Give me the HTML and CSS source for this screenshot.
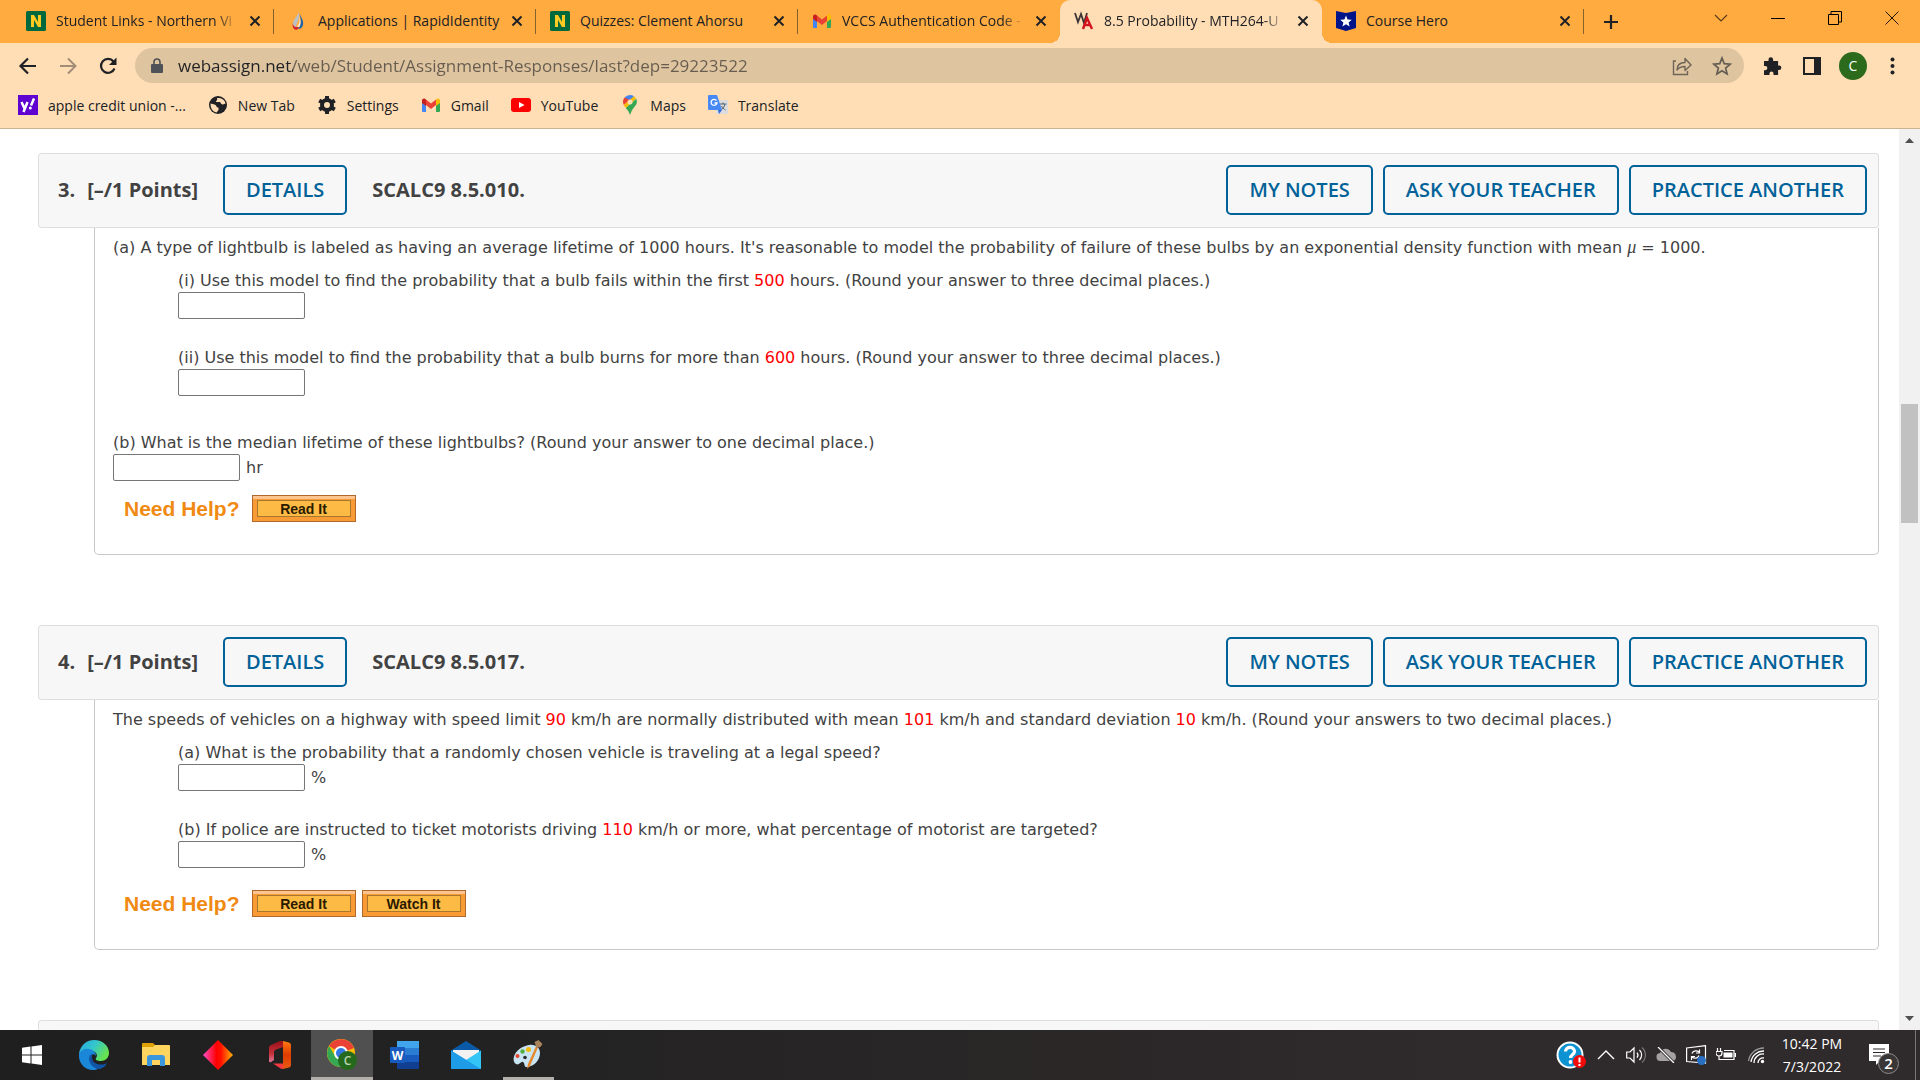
FILE: index.html
```html
<!DOCTYPE html>
<html lang="en">
<head>
  <meta charset="UTF-8" />
  <meta name="viewport" content="width=device-width, initial-scale=1.0"/>
  <title>8.5 Probability - MTH264</title>
  <link rel="stylesheet" href="styles.css">
</head>
<body>

<!-- Shared icons -->
<svg class="sprite" aria-hidden="true">
  <symbol id="i-close" viewBox="0 0 12 12"><path d="M1.500 1.500l9 9M10.500 1.500l-9 9" stroke="#202124" stroke-width="2" fill="none"/></symbol>
  <symbol id="i-nova" viewBox="0 0 20 20"><rect width="20" height="20" rx="1.500" fill="#006a3d"/><path d="M5 16V4h3l4 7V4h3v12h-3L8 9v7z" fill="#ffcb23"/></symbol>
  <symbol id="i-gmail" viewBox="0 0 20 20"><path d="M1 5v11a1 1 0 0 0 1 1h3V8.500z" fill="#4285f4"/><path d="M15 17h3a1 1 0 0 0 1-1V5l-4 3.500z" fill="#34a853"/><path d="M5 4.500v5.500l5 4 5-4V4.500l-5 4z" fill="#ea4335"/><path d="M1 5.500V8l4 3V4.500L4.300 4C3 3 1 3.800 1 5.500z" fill="#c5221f"/><path d="M15 4.500V11l4-3V5.500C19 3.800 17 3 15.700 4z" fill="#fbbc04"/></symbol>
</svg>

<header class="browser">
  <div class="tabs">
    <div class="tab">
      <svg class="icon"><use href="#i-nova"/></svg>
      <a href="#" class="tab-title fade">Student Links - Northern Vi</a>
      <button class="close" aria-label="Close tab"><svg><use href="#i-close"/></svg></button>
    </div>
    <div class="tab">
      <svg class="icon" viewBox="0 0 20 20"><path d="M11 1c-1 4-6 7-6 12a6 6 0 0 0 3 5c-1-5 4-8 3-17z" fill="#b9c0c8"/><path d="M11 1c1 4 5 8 4 13-1 3-3 4-5 4 3-3 4-8 1-17z" fill="#1d64ad"/><path d="M5 12c0 4 2 4 6 4-1 2-2 3-3 3-3-1-4-4-3-7z" fill="#d5232f"/><path d="M11 5c1 4 1 8-2 11 2 0 3-1 3-2 1-3 0-6-1-9z" fill="#f3f5f7"/></svg>
      <a href="#" class="tab-title">Applications | RapidIdentity</a>
      <button class="close" aria-label="Close tab"><svg><use href="#i-close"/></svg></button>
    </div>
    <div class="tab">
      <svg class="icon"><use href="#i-nova"/></svg>
      <a href="#" class="tab-title">Quizzes: Clement Ahorsu</a>
      <button class="close" aria-label="Close tab"><svg><use href="#i-close"/></svg></button>
    </div>
    <div class="tab no-line">
      <svg class="icon"><use href="#i-gmail"/></svg>
      <a href="#" class="tab-title fade">VCCS Authentication Code -</a>
      <button class="close" aria-label="Close tab"><svg><use href="#i-close"/></svg></button>
    </div>
    <div class="tab active">
      <svg class="icon" viewBox="0 0 20 20"><path d="M1 2l3 9 3-8 3 9 3-10" stroke="#3b3436" stroke-width="1.800" fill="none"/><path d="M9 18l4-11 5 11M10 14h6" stroke="#d2121c" stroke-width="2.400" fill="none"/></svg>
      <a href="#" class="tab-title fade">8.5 Probability - MTH264-U</a>
      <button class="close" aria-label="Close tab"><svg><use href="#i-close"/></svg></button>
    </div>
    <div class="tab">
      <svg class="icon" viewBox="0 0 20 20"><path d="M0 0l10 2 10-2v17l-10 3-10-3z" fill="#001489"/><path d="M10 4.500l1.600 3.900 4.200.3-3.200 2.700 1 4.100L10 13.300l-3.600 2.200 1-4.100-3.200-2.700 4.200-.3z" fill="#fff"/></svg>
      <a href="#" class="tab-title">Course Hero</a>
      <button class="close" aria-label="Close tab"><svg><use href="#i-close"/></svg></button>
    </div>
    <button class="new-tab" aria-label="New tab"><svg width="16" height="16" viewBox="0 0 16 16"><path d="M8 1v14M1 8h14" stroke="#202124" stroke-width="2.200"/></svg></button>
    <div class="window-buttons">
      <button aria-label="Search tabs"><svg width="14" height="14" viewBox="0 0 14 14"><path d="M1 4l6 6 6-6" stroke="#5a3d18" stroke-width="1.200" fill="none"/></svg></button>
      <button aria-label="Minimize"><svg width="14" height="14" viewBox="0 0 14 14"><path d="M0 7.500h14" stroke="#000"/></svg></button>
      <button aria-label="Restore"><svg width="14" height="14" viewBox="0 0 14 14"><path d="M.500 3.500h10v10H.500zM3 3V.500h10.500V11H11" stroke="#000" fill="none"/></svg></button>
      <button aria-label="Close"><svg width="14" height="14" viewBox="0 0 14 14"><path d="M.500.500l13 13M13.500.500l-13 13" stroke="#201508" fill="none"/></svg></button>
    </div>
  </div>

  <div class="toolbar">
    <button aria-label="Back"><svg width="20" height="20" viewBox="0 0 20 20"><path d="M18 10H3M10 2.500L2.500 10l7.500 7.500" stroke="#202124" stroke-width="2.200" fill="none"/></svg></button>
    <button aria-label="Forward"><svg width="20" height="20" viewBox="0 0 20 20"><path d="M2 10h15M10 2.500l7.500 7.500-7.500 7.500" stroke="#a28d77" stroke-width="2" fill="none"/></svg></button>
    <button aria-label="Reload"><svg width="20" height="20" viewBox="0 0 20 20"><path d="M16.500 12.500A7 7 0 1 1 15.500 5.500" stroke="#202124" stroke-width="2.200" fill="none"/><path d="M18.500 1.500V9H11z" fill="#202124"/></svg></button>
    <div class="omnibox">
      <svg width="12" height="16" viewBox="0 0 12 16"><path d="M1 6h10a1 1 0 0 1 1 1v7a1 1 0 0 1-1 1H1a1 1 0 0 1-1-1V7a1 1 0 0 1 1-1z" fill="#4f5256"/><path d="M3 7V4a3 3 0 0 1 6 0v3" stroke="#4f5256" stroke-width="1.600" fill="none"/></svg>
      <input class="url" type="text" aria-label="Address" value="webassign.net/web/Student/Assignment-Responses/last?dep=29223522">
      <button aria-label="Share"><svg width="20" height="20" viewBox="0 0 20 20"><path d="M4 5H1.500v13.500h14V15" stroke="#6e6558" stroke-width="1.400" fill="none"/><path d="M5 14c0-5 3-7.500 8-7.500v-4L19 9l-6 5.500v-4c-4 0-6 1-8 3.500z" stroke="#6e6558" stroke-width="1.400" fill="none" stroke-linejoin="round"/></svg></button>
      <button aria-label="Bookmark this tab"><svg width="20" height="20" viewBox="0 0 20 20"><path d="M10 2l2.200 5.600 6 .5-4.600 3.900 1.500 5.900L10 14.700l-5.100 3.200L6.400 12 1.800 8.100l6-.5z" stroke="#645d53" stroke-width="1.700" fill="none"/></svg></button>
    </div>
    <button aria-label="Extensions"><svg width="20" height="20" viewBox="0 0 20 20"><path d="M2 5h4.500V3.500a2.300 2.300 0 0 1 4.600 0V5h5v4.500h1a2.200 2.200 0 0 1 0 4.500h-1v5h-4.600v-1.500a2 2 0 0 0-4 0V19H2v-4.800h1.300a2 2 0 0 0 0-4.200H2z" fill="#202124"/></svg></button>
    <button aria-label="Side panel"><svg width="18" height="18" viewBox="0 0 18 18"><path d="M1 1h16v16H1z" stroke="#202124" stroke-width="2" fill="none"/><path d="M11 0h7v18h-7z" fill="#202124"/></svg></button>
    <button class="avatar" aria-label="Profile">C</button>
    <button aria-label="Menu"><svg width="5" height="18" viewBox="0 0 5 18"><g fill="#202124"><circle cx="2.500" cy="2.500" r="2"/><circle cx="2.500" cy="9" r="2"/><circle cx="2.500" cy="15.500" r="2"/></g></svg></button>
  </div>

  <nav class="bookmarks">
    <a href="#"><svg class="icon" viewBox="0 0 20 20"><rect width="20" height="20" fill="#5f01d1"/><path d="M3.500 7l3 6.500M9.500 7L5.500 17M13 10.500L16 3.500" stroke="#fff" stroke-width="2.500" fill="none"/><circle cx="12.300" cy="13" r="1.500" fill="#fff"/></svg>apple credit union -...</a>
    <a href="#"><svg class="icon" viewBox="0 0 20 20"><circle cx="10" cy="10" r="9" fill="#202124"/><path d="M2.500 8.500l4 1c3 1 1 3 4 3v2.500l-2 2.500c-4-1-6-4-6-9zM9 3c1 2-1 2.500-1 4h4c1 1 1 2.500 3 2.500l2.500-1C17 5 14 3 9 3z" fill="#ffdeb6"/></svg>New Tab</a>
    <a href="#"><svg class="icon" viewBox="0 0 20 20"><circle cx="10" cy="10" r="5" stroke="#202124" stroke-width="4" fill="none"/><path d="M10 1v4M10 15v4M2.200 5.500l3.500 2M14.300 12.500l3.500 2M2.200 14.500l3.500-2M14.300 7.500l3.500-2" stroke="#202124" stroke-width="4"/></svg>Settings</a>
    <a href="#"><svg class="icon"><use href="#i-gmail"/></svg>Gmail</a>
    <a href="#"><svg class="icon" viewBox="0 0 20 20"><rect y="3" width="20" height="14" rx="3" fill="#f00"/><path d="M8 7l5.500 3L8 13z" fill="#fff"/></svg>YouTube</a>
    <a href="#"><svg class="icon" viewBox="0 0 20 20"><path d="M10 0a7 7 0 0 0-5.400 2.500L10 7l4-5.700A7 7 0 0 0 10 0z" fill="#4285f4"/><path d="M4.600 2.500A7 7 0 0 0 3.800 10L10 5z" fill="#ea4335"/><path d="M3.800 10l2 3L16 3.500 14 1.300z" fill="#fbbc04"/><path d="M16.200 3.800C18 8 16 10 14 12.500S11 17 10 20c-1-3-2-4.500-4.200-7z" fill="#34a853"/><circle cx="10" cy="7" r="2.500" fill="#ffdeb6"/></svg>Maps</a>
    <a href="#"><svg class="icon" viewBox="0 0 20 20"><rect x="8" y="5" width="12" height="14" rx="1" fill="#dadce0"/><path d="M11.500 9h7M15 7.500V9M17 9c-.500 3-2.500 5-4.500 6M13.500 11c1 2 2.500 3 4 4" stroke="#52616c" fill="none"/><path d="M1 0h8l5 15H1a1 1 0 0 1-1-1V1a1 1 0 0 1 1-1z" fill="#4688f4"/><path d="M10 15h4l-3 4z" fill="#3367d6"/><path d="M8.500 5.500a3 3 0 1 0 .5 2.500H6.500" stroke="#fff" stroke-width="1.300" fill="none"/></svg>Translate</a>
  </nav>
</header>

<div class="viewport">
  <main class="page">
    <section class="question">
      <div class="question-head">
        <h2><span>3.</span> <span>[–/1 Points]</span></h2>
        <button class="btn">DETAILS</button>
        <h3>SCALC9 8.5.010.</h3>
        <div class="actions">
          <button class="btn">MY NOTES</button>
          <button class="btn">ASK YOUR TEACHER</button>
          <button class="btn">PRACTICE ANOTHER</button>
        </div>
      </div>
      <div class="question-body">
        <p>(a) A type of lightbulb is labeled as having an average lifetime of 1000 hours. It's reasonable to model the probability of failure of these bulbs by an exponential density function with mean <i class="mu">μ</i> = 1000.</p>
        <div class="parts">
          <div class="part">
            <label for="q3a1">(i) Use this model to find the probability that a bulb fails within the first <em>500</em> hours. (Round your answer to three decimal places.)</label>
            <div class="answer"><input type="text" id="q3a1"></div>
          </div>
          <div class="part">
            <label for="q3a2">(ii) Use this model to find the probability that a bulb burns for more than <em>600</em> hours. (Round your answer to three decimal places.)</label>
            <div class="answer"><input type="text" id="q3a2"></div>
          </div>
        </div>
        <div class="part last-part">
          <label for="q3b">(b) What is the median lifetime of these lightbulbs? (Round your answer to one decimal place.)</label>
          <div class="answer"><input type="text" id="q3b"> hr</div>
        </div>
        <div class="help">
          <strong>Need Help?</strong>
          <button>Read It</button>
        </div>
      </div>
    </section>

    <section class="question">
      <div class="question-head">
        <h2><span>4.</span> <span>[–/1 Points]</span></h2>
        <button class="btn">DETAILS</button>
        <h3>SCALC9 8.5.017.</h3>
        <div class="actions">
          <button class="btn">MY NOTES</button>
          <button class="btn">ASK YOUR TEACHER</button>
          <button class="btn">PRACTICE ANOTHER</button>
        </div>
      </div>
      <div class="question-body">
        <p>The speeds of vehicles on a highway with speed limit <em>90</em> km/h are normally distributed with mean <em>101</em> km/h and standard deviation <em>10</em> km/h. (Round your answers to two decimal places.)</p>
        <div class="parts">
          <div class="part">
            <label for="q4a">(a) What is the probability that a randomly chosen vehicle is traveling at a legal speed?</label>
            <div class="answer"><input type="text" id="q4a"> %</div>
          </div>
          <div class="part">
            <label for="q4b">(b) If police are instructed to ticket motorists driving <em>110</em> km/h or more, what percentage of motorist are targeted?</label>
            <div class="answer"><input type="text" id="q4b"> %</div>
          </div>
        </div>
        <div class="help">
          <strong>Need Help?</strong>
          <button>Read It</button>
          <button>Watch It</button>
        </div>
      </div>
    </section>

    <section class="question">
      <div class="question-head"></div>
    </section>
  </main>

  <div class="scrollbar">
    <svg width="9" height="5" viewBox="0 0 9 5"><path d="M0 5l4.500-5L9 5z" fill="#505050"/></svg>
    <div class="track"><div class="thumb"></div></div>
    <svg width="9" height="5" viewBox="0 0 9 5"><path d="M0 0l4.500 5L9 0z" fill="#505050"/></svg>
  </div>
</div>

<footer class="taskbar">
  <div class="apps">
    <button aria-label="Start"><svg width="20" height="20" viewBox="0 0 20 20"><path d="M0 2.800L8.500 1.600V9.500H0zM9.500 1.500L20 0v9.500H9.500zM0 10.500h8.500v7.900L0 17.200zM9.500 10.500H20V20L9.500 18.500z" fill="#fff"/></svg></button>
    <button aria-label="Edge"><svg width="30" height="30" viewBox="0 0 30 30"><defs><linearGradient id="edge" x1="0" y1="0" x2="1" y2=".5"><stop offset="0" stop-color="#26a5dd"/><stop offset=".5" stop-color="#33c6cf"/><stop offset="1" stop-color="#67e350"/></linearGradient></defs><path d="M0 14C1 6 7 0 15 0c9 0 15 6 15 13 0 5-4 8-8 8-4 0-6-1-5-3 2-2 1-7-5-7-5 0-9 2-12 3z" fill="url(#edge)"/><path d="M0 14c2-4 6-6 10-5 5 1 7 4 7 7-2-3-5-2-6 1-2 5 3 10 8 12-10 4-20-4-19-15z" fill="#1a87d8"/><path d="M11 15c-3 7 3 14 10 14 3-1 6-3 7-6-5 3-15 2-15-6 0-2 1-3 2-3z" fill="#1054a5"/></svg></button>
    <button aria-label="File Explorer"><svg width="28" height="24" viewBox="0 0 28 24"><path d="M0 3V1a1 1 0 0 1 1-1h10l2 2h14v20H0z" fill="#e0a106"/><path d="M0 4h11l2-2h14a1 1 0 0 1 1 1v19H0z" fill="#ffd55f"/><path d="M5 23v-8a3 3 0 0 1 3-3h12a3 3 0 0 1 3 3v8h-5v-6h-8v6z" fill="#3a96dd"/></svg></button>
    <button aria-label="Media"><svg width="30" height="30" viewBox="0 0 30 30"><defs><linearGradient id="dia"><stop offset="0" stop-color="#ff4fc8"/><stop offset=".45" stop-color="#ff0000"/><stop offset=".6" stop-color="#ff1000"/><stop offset="1" stop-color="#ffb400"/></linearGradient></defs><path d="M15 0l15 15-15 15L0 15z" fill="url(#dia)"/></svg></button>
    <button aria-label="Office"><svg width="22" height="28" viewBox="0 0 22 28"><defs><linearGradient id="office" x1="0" y1="0" x2="0" y2="1"><stop offset="0" stop-color="#9b1018"/><stop offset=".6" stop-color="#c5323a"/><stop offset="1" stop-color="#e07aa0"/></linearGradient><linearGradient id="office2" x1="0" y1="0" x2="0" y2="1"><stop offset="0" stop-color="#fc7a12"/><stop offset=".5" stop-color="#e03c00"/><stop offset="1" stop-color="#e85a12"/></linearGradient></defs><path d="M0 8c0-2 0-3 2-4l9-4h3v6L7 8.500c-1 .500-2 1-2 2.500v8l-3 2c-1 .500-2 0-2-1z" fill="url(#office)"/><path d="M14 0l6 1.500c1 .500 2 1 2 2.500v20c0 1-.500 2-2 2.500L14 28z" fill="url(#office2)"/><path d="M4 22.500h10V28l-2-.300z" fill="#f2393f"/></svg></button>
    <button class="current" aria-label="Chrome"><svg width="30" height="32" viewBox="0 0 30 32"><circle cx="14" cy="14" r="14" fill="#fbbc04"/><path d="M14 14L2 7a14 14 0 0 1 25 2z" fill="#ea4335"/><path d="M2 7a14 14 0 0 0 11 21l5-10-10-1z" fill="#34a853"/><circle cx="14" cy="14" r="7" fill="#fff"/><circle cx="14" cy="14" r="5" fill="#3478e5"/><circle cx="20.500" cy="21.500" r="9.500" fill="#256a1c"/><text x="20.500" y="26" text-anchor="middle" class="badge-letter">C</text></svg></button>
    <button aria-label="Word"><svg width="29" height="28" viewBox="0 0 29 28"><path d="M7 0h22v7H7z" fill="#41a5ee"/><path d="M7 7h22v7H7z" fill="#2b7cd3"/><path d="M7 14h22v7H7z" fill="#185abd"/><path d="M7 21h22v7H7z" fill="#103f91"/><rect y="6" width="15" height="16" rx="1" fill="#185abd"/><text x="7.500" y="18.500" text-anchor="middle" class="word-letter">W</text></svg></button>
    <button aria-label="Mail"><svg width="30" height="28" viewBox="0 0 30 28"><path d="M0 9.500L15 0l15 9.500v2H0z" fill="#0b5aa8"/><path d="M2 9h26v10H2z" fill="#f2f2f2"/><path d="M0 9.500L15 19l15-9.500V28H0z" fill="#32c5f5"/><path d="M0 9.500L30 28H0z" fill="#1f9ce8"/></svg></button>
    <button class="open" aria-label="Paint"><svg width="30" height="30" viewBox="0 0 30 30"><path d="M16 5c7-1 11 3 11 8 0 7-6 14-14 14-2 0-1-4-3-5s-4 4-7 2-3-6-1-10C5 9 10 6 16 5z" fill="#c9e4f2"/><circle cx="4.500" cy="16" r="2" fill="#e8442e"/><circle cx="9.500" cy="11.500" r="2.200" fill="#52b043"/><circle cx="15.500" cy="9.500" r="2.500" fill="#f5b90b"/><circle cx="12" cy="17.500" r="1.800" fill="#2a2a2a"/><path d="M24 4l2 1-9 21-3 3 1-5z" fill="#e8892e"/><path d="M21.500 2l4-2 4 4-2 3-4 1z" fill="#a8835c"/></svg></button>
  </div>
  <div class="tray">
    <button class="wide" aria-label="Help"><svg width="30" height="28" viewBox="0 0 30 28"><circle cx="14" cy="14" r="12.500" fill="#0e93d2" stroke="#fff" stroke-width="2"/><path d="M9.500 10.500c0-5.500 9-5.500 9 0 0 3-4 3-4 6.500" stroke="#fff" stroke-width="3.200" fill="none"/><circle cx="14.500" cy="21" r="1.900" fill="#fff"/><circle cx="23.500" cy="20.500" r="6.500" fill="#f00a0a"/><path d="M23.500 16.500v5M23.500 23v2" stroke="#fff" stroke-width="2"/></svg></button>
    <button aria-label="Show hidden icons"><svg width="18" height="10" viewBox="0 0 18 10"><path d="M1 9l8-8 8 8" stroke="#fff" stroke-width="1.400" fill="none"/></svg></button>
    <button aria-label="Volume"><svg width="20" height="18" viewBox="0 0 20 18"><path d="M.700 6H4l4-4v14l-4-4H.700z" stroke="#fff" stroke-width="1.200" fill="none"/><path d="M11 6.500a4 4 0 0 1 0 5M13.500 4a7 7 0 0 1 0 10" stroke="#fff" stroke-width="1.200" fill="none"/><path d="M16 1.500a10 10 0 0 1 0 15" stroke="#777" stroke-width="1.200" fill="none"/></svg></button>
    <button aria-label="OneDrive"><svg width="20" height="16" viewBox="0 0 20 16"><path d="M5 14a4 4 0 0 1-1-8c2-5 8-6 11-1 4 0 5 3 5 5s-1 4-4 4z" fill="#a3a1a1"/><path d="M2 0l16 16" stroke="#2f2a2b" stroke-width="3"/><path d="M2 0l16 16" stroke="#fff" stroke-width="1.300"/></svg></button>
    <button aria-label="Update"><svg width="21" height="20" viewBox="0 0 21 20"><path d="M.600 3L19.500.600V18L.600 16.500z" stroke="#fff" stroke-width="1.200" fill="none"/><path d="M6 8.500c1-3 5-3.500 7-1.500M13.500 4.500V8H10M13 10.500c-1 3-5 3.500-7 1.500M5.500 15v-3.500H9" stroke="#fff" stroke-width="1.200" fill="none"/><circle cx="15.500" cy="15.500" r="4.500" fill="#2a70c2"/></svg></button>
    <button aria-label="Battery"><svg width="20" height="14" viewBox="0 0 20 14"><path d="M1.500 0v3M4.500 0v3M0 3.500h6v1.500a3 3 0 0 1-6 0zM3 8v3.500h15v-9H8" stroke="#fff" stroke-width="1.200" fill="none"/><path d="M7.500 4.500h9v5h-9zM18.500 5H20v4h-1.500z" fill="#fff"/></svg></button>
    <button aria-label="Network"><svg width="17" height="17" viewBox="0 0 17 17"><path d="M10 16a5 5 0 0 1 6-5M6 16A9 9 0 0 1 16 7M3 15A12.500 12.500 0 0 1 16 4" stroke="#fff" stroke-width="1.300" fill="none"/><path d="M.500 14A15.500 15.500 0 0 1 16 1" stroke="#999" stroke-width="1.300" fill="none"/><circle cx="14.500" cy="14.500" r="1.700" fill="#fff"/></svg></button>
    <div class="clock"><span>10:42 PM</span><span>7/3/2022</span></div>
    <button class="notices" aria-label="Notifications"><svg width="32" height="32" viewBox="0 0 32 32"><path d="M1 1h20v17H12l-4 4v-4H1z" fill="#fff"/><path d="M5 6h12M5 9.500h12M5 13h8" stroke="#2f2a2b" stroke-width="1.200"/><circle cx="20.500" cy="20.500" r="10" fill="#3a3637" stroke="#8d8b8b"/><text x="20.500" y="26" text-anchor="middle" class="count">2</text></svg></button>
  </div>
</footer>

</body>
</html>
```
FILE: styles.css
```css
* { margin: 0; padding: 0; box-sizing: border-box; }

body {
  height: 100vh;
  display: flex;
  flex-direction: column;
  overflow: hidden;
  background: #fff;
  color: #424242;
  font-family: 'Open Sans', sans-serif;
}

button {
  display: flex;
  align-items: center;
  justify-content: center;
  background: none;
  border: none;
  font-family: inherit;
  cursor: pointer;
}

a { color: inherit; text-decoration: none; }
svg { flex: none; display: block; }

.sprite { position: absolute; width: 0; height: 0; }
.icon { width: 20px; height: 20px; }

/* Browser */
.browser {
  background: #ffdeb6;
  color: #202124;
  font-size: 14px;
  border-bottom: 1px solid #cdb391;
}

.tabs {
  display: flex;
  height: 43px;
  padding-left: 12px;
  background: #ffab40;
}

.tab {
  position: relative;
  flex: 0 1 262px;
  min-width: 0;
  display: flex;
  align-items: center;
  gap: 10px;
  padding: 0 12px 2px 14px;
}

.tab::after {
  content: '';
  position: absolute;
  right: 0;
  top: 9px;
  width: 1px;
  height: 25px;
  background: #86602f;
}
.no-line::after { display: none; }

.tab.active {
  background: #ffdeb6;
  border-radius: 10px 10px 0 0;
}
/* curved feet of the active tab */
.active::before, .active::after {
  content: '';
  position: absolute;
  top: auto;
  bottom: 0;
  width: 10px;
  height: 10px;
}
.active::before {
  left: -10px;
  background: radial-gradient(circle at 0 0, transparent 10px, #ffdeb6 10px);
}
.active::after {
  right: -10px;
  background: radial-gradient(circle at 100% 0, transparent 10px, #ffdeb6 10px);
}

.tab-title {
  flex: 1;
  overflow: hidden;
  white-space: nowrap;
}
.fade {
  -webkit-mask-image: linear-gradient(to right, #000 88%, transparent);
  mask-image: linear-gradient(to right, #000 88%, transparent);
}

.close { width: 14px; height: 20px; }
.close svg { width: 12px; height: 12px; }

.new-tab { width: 54px; }

.window-buttons {
  display: flex;
  align-items: center;
  height: 36px;
  margin-left: auto;
}
.window-buttons button { width: 57px; height: 36px; }

.toolbar {
  display: flex;
  align-items: center;
  height: 45px;
  padding: 0 16px 0 8px;
}
.toolbar > button { width: 40px; height: 36px; }
.toolbar > button:last-child { margin-right: -8px; }

.toolbar > .avatar {
  width: 28px;
  height: 28px;
  margin: 0 5px 0 7px;
  border-radius: 50%;
  background: #2c6a1c;
  color: #fff;
  font-size: 14px;
}

.omnibox {
  flex: 1;
  display: flex;
  align-items: center;
  height: 35px;
  margin: 0 8px 0 7px;
  padding: 0 2px 0 16px;
  border-radius: 18px;
  background: #dfc4a0;
}
.omnibox button { width: 40px; height: 35px; }

.url {
  flex: 1;
  margin-left: 15px;
  border: none;
  outline: none;
  color: transparent;
  font: 17px 'Open Sans', sans-serif;
  background: linear-gradient(to right, #202124 115px, #665c4f 115px);
  -webkit-background-clip: text;
  background-clip: text;
}

.bookmarks {
  display: flex;
  align-items: center;
  gap: 22px;
  height: 40px;
  padding: 0 18px 6px;
}
.bookmarks a { display: flex; align-items: center; gap: 10px; }

/* Page */
.viewport {
  flex: 1;
  min-height: 0;
  display: flex;
}

.page {
  flex: 1;
  overflow: hidden;
  padding: 24px 20px 0 38px;
}

.question { margin-bottom: 70px; }

.question-head {
  display: flex;
  align-items: center;
  height: 75px;
  padding: 0 11px 2px 19px;
  background: #f7f7f7;
  border: 1px solid #dedede;
  border-radius: 3px;
}
.question-head h2, .question-head h3 {
  font-size: 20px;
  font-weight: 700;
}
.question-head h2 {
  display: flex;
  gap: 12px;
  width: 165px;
}
.question-head h3 { margin-left: 25px; }

.actions {
  display: flex;
  gap: 10px;
  margin-left: auto;
}

.btn {
  height: 50px;
  padding: 0 21px;
  border: 2px solid #006298;
  border-radius: 5px;
  color: #006298;
  font-size: 20px;
  font-weight: 600;
}

.question-body {
  margin-left: 56px;
  padding: 10px 18px 32px;
  border: 1px solid #c8c8c8;
  border-top: none;
  border-radius: 0 0 5px 5px;
  font-family: Verdana, 'DejaVu Sans', sans-serif;
  font-size: 16px;
  line-height: 20px;
}
.question-body em { color: #f00; font-style: normal; }
.mu { font-family: 'Liberation Serif', serif; font-size: 18px; line-height: 1; }

.parts { margin: 13px 0 0 65px; }
.part + .part { margin-top: 29px; }
.part label { display: block; }
.last-part { margin-top: 37px; }

.answer {
  display: flex;
  gap: 6px;
  margin-top: 1px;
  line-height: 27px;
}
.answer input {
  width: 127px;
  height: 27px;
  padding: 0 4px;
  border: 1px solid #767676;
  border-radius: 2px;
  font-size: 16px;
}

.help {
  display: flex;
  align-items: center;
  gap: 6px;
  margin: 14px 0 0 11px;
  font-family: 'Liberation Sans', Arial, sans-serif;
}
.parts + .help { margin-top: 22px; }
.help strong {
  margin-right: 6px;
  color: #f08a12;
  font-size: 21px;
}
.help button {
  width: 104px;
  height: 27px;
  border: 1px solid #b0692a;
  background: #fdbb45;
  box-shadow: inset 0 3px 0 #fcc590, inset 0 0 0 4px #f99b35, inset 0 0 0 5px #a9762e;
  color: #2a1a00;
  font-size: 14px;
  font-weight: 700;
}

/* Scrollbar */
.scrollbar {
  width: 21px;
  display: flex;
  flex-direction: column;
  align-items: center;
  padding: 9px 2px;
  background: #f1f1f1;
}
.track {
  flex: 1;
  width: 100%;
  display: flex;
  flex-direction: column;
  padding: 7px 0;
}
.track::before { content: ''; flex: 254; }
.track::after { content: ''; flex: 486; }
.thumb { height: 119px; background: #c1c1c1; }

/* Taskbar */
.taskbar {
  display: flex;
  justify-content: space-between;
  height: 50px;
  padding-left: 1px;
  background: linear-gradient(to right, #1f1f1f, #242323 30%, #2f2a2b 75%);
  color: #fff;
}
.apps, .tray { display: flex; }
.apps button {
  width: 62px;
  height: 50px;
}
.apps .current {
  background: #505050;
  border-bottom: 3px solid #b3afab;
  padding-top: 3px;
}
.apps .open {
  background: linear-gradient(#b3afab, #b3afab) center bottom / 51px 3px no-repeat;
}
.badge-letter { font: 600 12px 'Open Sans', sans-serif; fill: #b9d0b3; }
.word-letter { font: 700 12px 'Open Sans', sans-serif; fill: #fff; }
.count { font: 600 15px 'Open Sans', sans-serif; fill: #fff; }

.tray button { width: 30px; height: 50px; }
.tray .wide { width: 40px; }
.clock {
  width: 82px;
  display: flex;
  flex-direction: column;
  align-items: center;
  justify-content: center;
  font-size: 14px;
  line-height: 23px;
}
.tray .notices {
  width: 63px;
  margin-right: 4px;
  padding-top: 8px;
  border-right: 1px solid #777;
}
```
